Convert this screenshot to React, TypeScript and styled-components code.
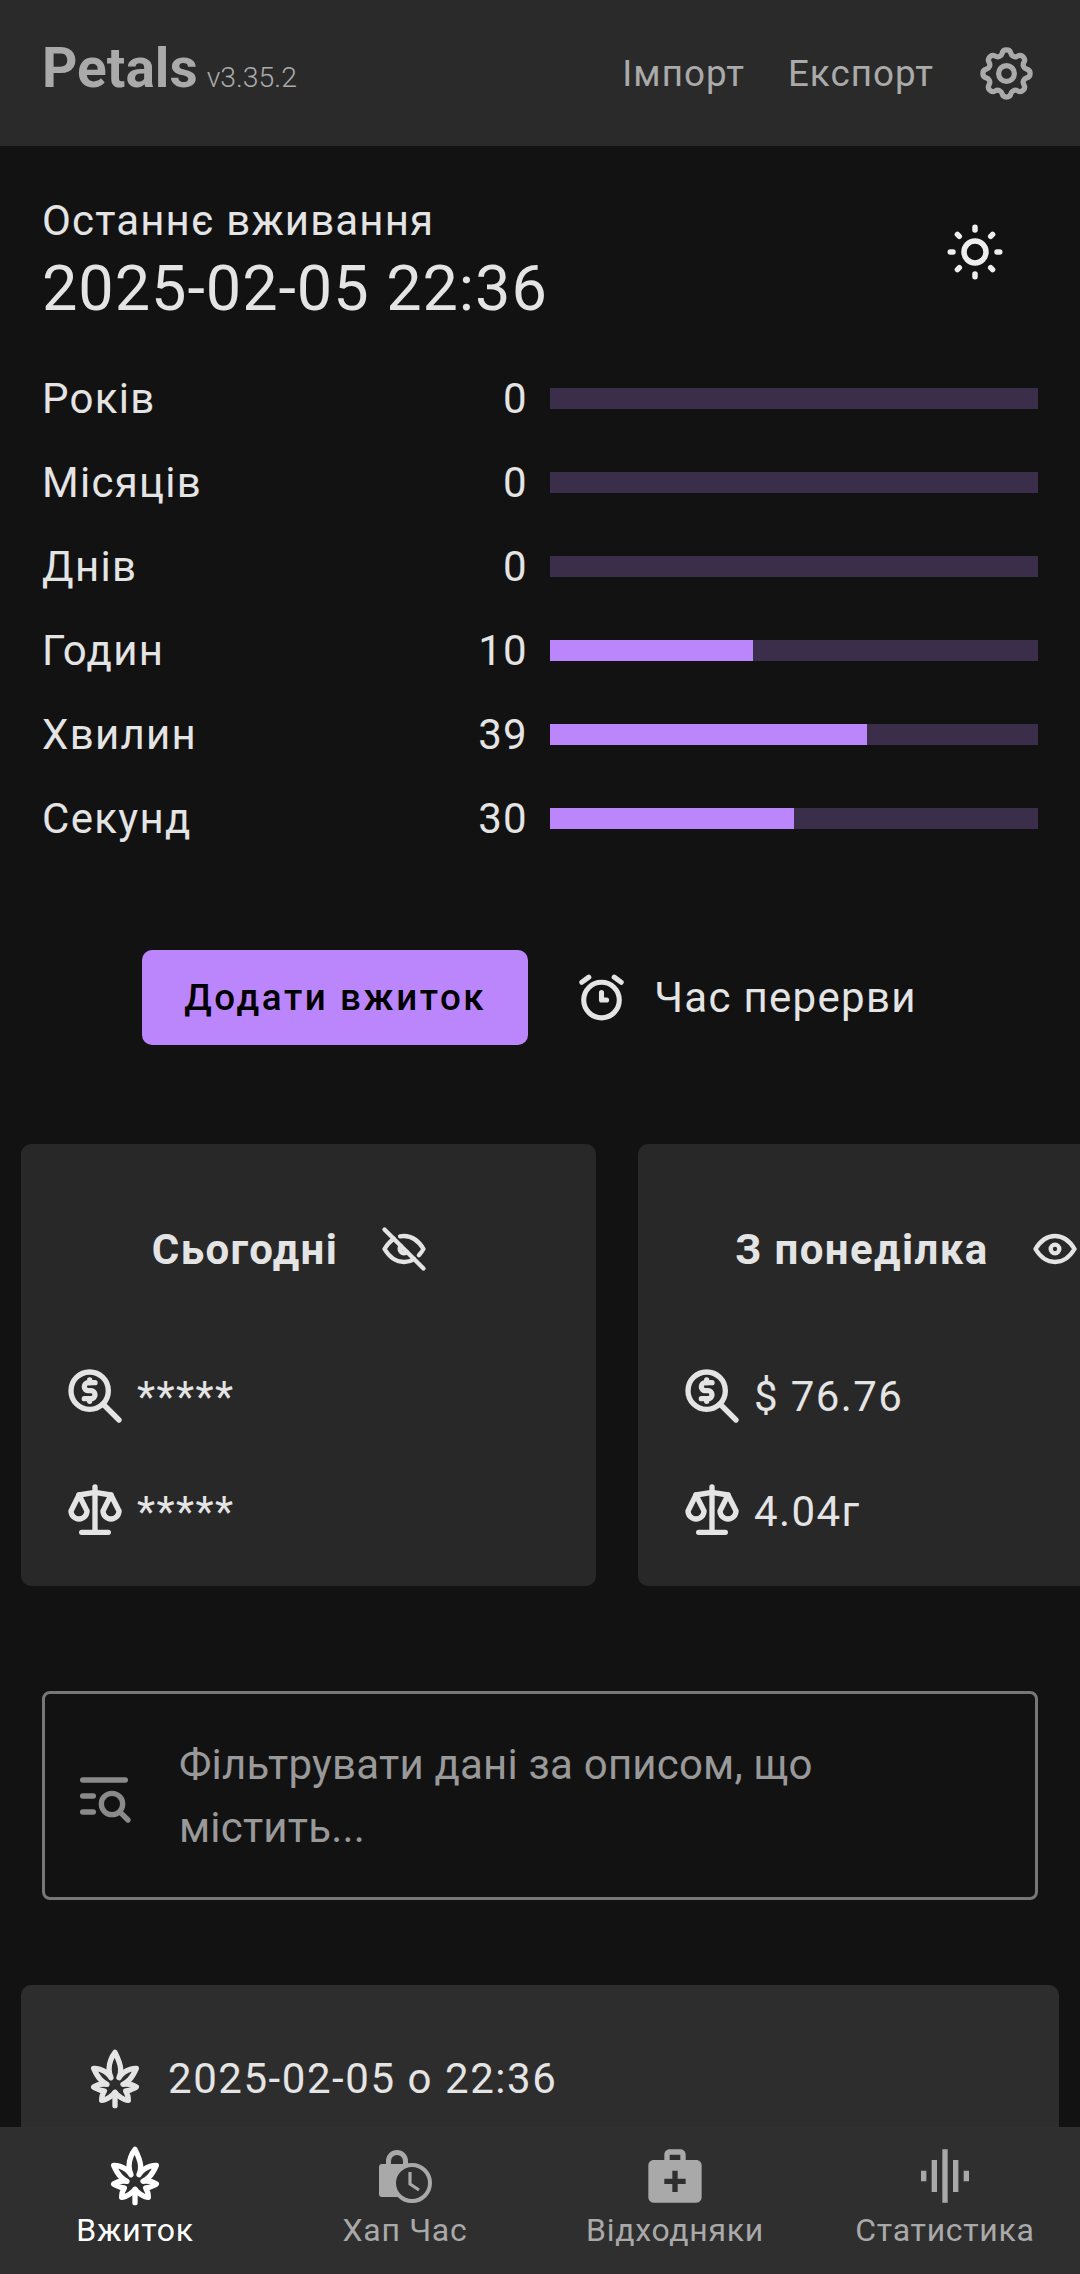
import React from "react";
import styled, { createGlobalStyle } from "styled-components";
import { TbSettings, TbSun, TbAlarm, TbEye, TbEyeOff, TbZoomMoney, TbScale, TbCannabis, TbListSearch } from "react-icons/tb";
import { MdMedicalServices, MdGraphicEq } from "react-icons/md";

const Global = createGlobalStyle`
  html, body { margin: 0; padding: 0; background: #121212; }
  body { font-family: Roboto, "Noto Sans", sans-serif; color: #e4e4e4; }
  * { box-sizing: border-box; }
`;
const Page = styled.div`
  position: relative; width: 1080px; height: 2274px; overflow: hidden; background: #121212;
`;
const Header = styled.header`
  height: 146px; background: #2a2a2a; display: flex; align-items: center; padding: 0 42px 0 42px; color: #aaaaaa;
`;
const Brand = styled.div`
  font-size: 55px; font-weight: 700; flex: 1; display: flex; align-items: baseline; gap: 9px; margin-bottom: 10px;
`;
const Version = styled.span`
  font-size: 28.4px; font-weight: 300;
`;
const HeaderLink = styled.span<{ $gap: number }>`
  font-size: 36.75px; margin-right: ${(p) => p.$gap}px; letter-spacing: 1.05px;
`;
const Summary = styled.section`
  padding: 50px 42px 0; display: flex; justify-content: space-between;
`;
const SummaryText = styled.div`
  display: flex; flex-direction: column;
`;
const Caption = styled.div`
  font-size: 42px; line-height: 50px; letter-spacing: 1.15px;
`;
const LastDate = styled.div`
  font-size: 63px; line-height: 76px; margin-top: 5px; letter-spacing: 0.95px;
`;
const SunButton = styled.div`
  margin: 23px 30px 0 0; line-height: 0; color: #eee;
`;
const Timers = styled.div`
  margin-top: 29px; padding: 0 42px; display: flex; flex-direction: column;
`;
const TimerRow = styled.div`
  height: 84px; display: flex; align-items: center; font-size: 42px; letter-spacing: 1.3px;
`;
const TimerLabel = styled.span`flex: 1;`;
const TimerValue = styled.span`
  margin-right: 22px;
`;
const Track = styled.div`
  width: 488px; height: 21px; margin-top: 1px; background: #3a2e4a;
`;
const Fill = styled.div`
  height: 100%; background: #bb86fc;
`;
const Actions = styled.div`
  margin-top: 90px; display: flex; justify-content: center; align-items: center; padding-right: 21px; gap: 43px;
`;
const Primary = styled.button`
  width: 386px; height: 95px; background: #bb86fc; color: #000; border: 0; border-radius: 10px;
  font: 500 36.75px Roboto, sans-serif; letter-spacing: 2.6px;
`;
const Ghost = styled.div`
  display: flex; align-items: center; gap: 22px; font-size: 42px; letter-spacing: 1.3px;
`;
const CardScroller = styled.div`
  margin-top: 99px; padding-left: 21px; display: flex; gap: 42px; width: 1300px;
`;
const Card = styled.div`
  width: 575px; height: 442px; background: #282828; border-radius: 10px; padding: 80px 42px 0; flex: none;
`;
const CardHead = styled.div`
  display: flex; justify-content: center; align-items: center; gap: 40px; height: 50px; padding-right: 35px;
  font-size: 42px; font-weight: 700; letter-spacing: 1.4px; white-space: nowrap;
`;
const Stat = styled.div<{ $first?: boolean }>`
  display: flex; align-items: center; height: 56px; margin-top: ${(p) => (p.$first ? "94px" : "59px")};
  font-size: 42px; letter-spacing: 1.4px; gap: 10px;
`;
const Filter = styled.div`
  margin: 105px 42px 0; height: 209px; border: 3px solid #777; border-radius: 8px; display: flex; align-items: center;
  padding: 0 27px; gap: 43px; color: #999; font-size: 42px; line-height: 63px; letter-spacing: 0.2px;
  svg { flex: none; color: #8a8a8a; }
`;
const EntryCard = styled.div`
  margin: 85px 21px 0; height: 400px; background: #2d2d2d; border-radius: 10px; padding: 62px 62px 0;
  display: flex; align-items: flex-start; gap: 21px; font-size: 42px; line-height: 64px; letter-spacing: 1.55px;
`;
const Nav = styled.nav`
  position: absolute; left: 0; right: 0; bottom: 0; height: 147px; background: #2f2f2f;
  display: grid; grid-template-columns: repeat(4, 270px);
`;
const NavItem = styled.div<{ $active?: boolean }>`
  display: flex; flex-direction: column; align-items: center; padding-top: 17px;
  color: ${(p) => (p.$active ? "#fff" : "#a9a9a9")}; font-size: 32px; line-height: 44px; letter-spacing: 0.7px;
`;
const NavIcon = styled.div`
  height: 64px; display: flex; align-items: center; justify-content: center;
`;

const timers: [string, number, number][] = [
  ["Років", 0, 0], ["Місяців", 0, 0], ["Днів", 0, 0],
  ["Годин", 10, 41.7], ["Хвилин", 39, 65], ["Секунд", 30, 50],
];

const LockClock = () => (
  <svg width="53" height="53" viewBox="0 0 53 53" fill="none">
    <path
      d="M0 17a3 3 0 0 1 3-3h4v-3a11 11 0 0 1 22 0v3h4v33H3a3 3 0 0 1-3-3Z M12 14h12v-3a6 6 0 0 0-12 0Z"
      fill="currentColor"
      fillRule="evenodd"
    />
    <circle cx="33" cy="33" r="18" fill="#2f2f2f" stroke="currentColor" strokeWidth="4" />
    <path d="M31 22v12l9 6" stroke="currentColor" strokeWidth="3.2" />
  </svg>
);

export default function App() {
  return (
    <Page>
      <Global />
      <Header>
        <Brand>Petals<Version>v3.35.2</Version></Brand>
        <HeaderLink $gap={43}>Імпорт</HeaderLink>
        <HeaderLink $gap={41}>Експорт</HeaderLink>
        <TbSettings size={63} />
      </Header>
      <Summary>
        <SummaryText>
          <Caption>Останнє вживання</Caption>
          <LastDate>2025-02-05 22:36</LastDate>
        </SummaryText>
        <SunButton><TbSun size={66} /></SunButton>
      </Summary>
      <Timers>
        {timers.map(([l, v, w]) => (
          <TimerRow key={l}>
            <TimerLabel>{l}</TimerLabel>
            <TimerValue>{v}</TimerValue>
            <Track><Fill style={{ width: `${w}%` }} /></Track>
          </TimerRow>
        ))}
      </Timers>
      <Actions>
        <Primary>Додати вжиток</Primary>
        <Ghost><TbAlarm size={61} />Час перерви</Ghost>
      </Actions>
      <CardScroller>
        <Card>
          <CardHead>Сьогодні<TbEyeOff size={52} /></CardHead>
          <Stat $first><TbZoomMoney size={64} />*****</Stat>
          <Stat><TbScale size={64} />*****</Stat>
        </Card>
        <Card>
          <CardHead>З понеділка<TbEye size={52} /></CardHead>
          <Stat $first><TbZoomMoney size={64} />$ 76.76</Stat>
          <Stat><TbScale size={64} />4.04г</Stat>
        </Card>
      </CardScroller>
      <Filter>
        <TbListSearch size={64} />
        <span>Фільтрувати дані за описом, що містить...</span>
      </Filter>
      <EntryCard>
        <TbCannabis size={64} />
        <span>2025-02-05 о 22:36</span>
      </EntryCard>
      <Nav>
        <NavItem $active><NavIcon><TbCannabis size={64} /></NavIcon>Вжиток</NavItem>
        <NavItem><NavIcon><LockClock /></NavIcon>Хап Час</NavItem>
        <NavItem><NavIcon><MdMedicalServices size={64} /></NavIcon>Відходняки</NavItem>
        <NavItem><NavIcon><MdGraphicEq size={64} /></NavIcon>Статистика</NavItem>
      </Nav>
    </Page>
  );
}
